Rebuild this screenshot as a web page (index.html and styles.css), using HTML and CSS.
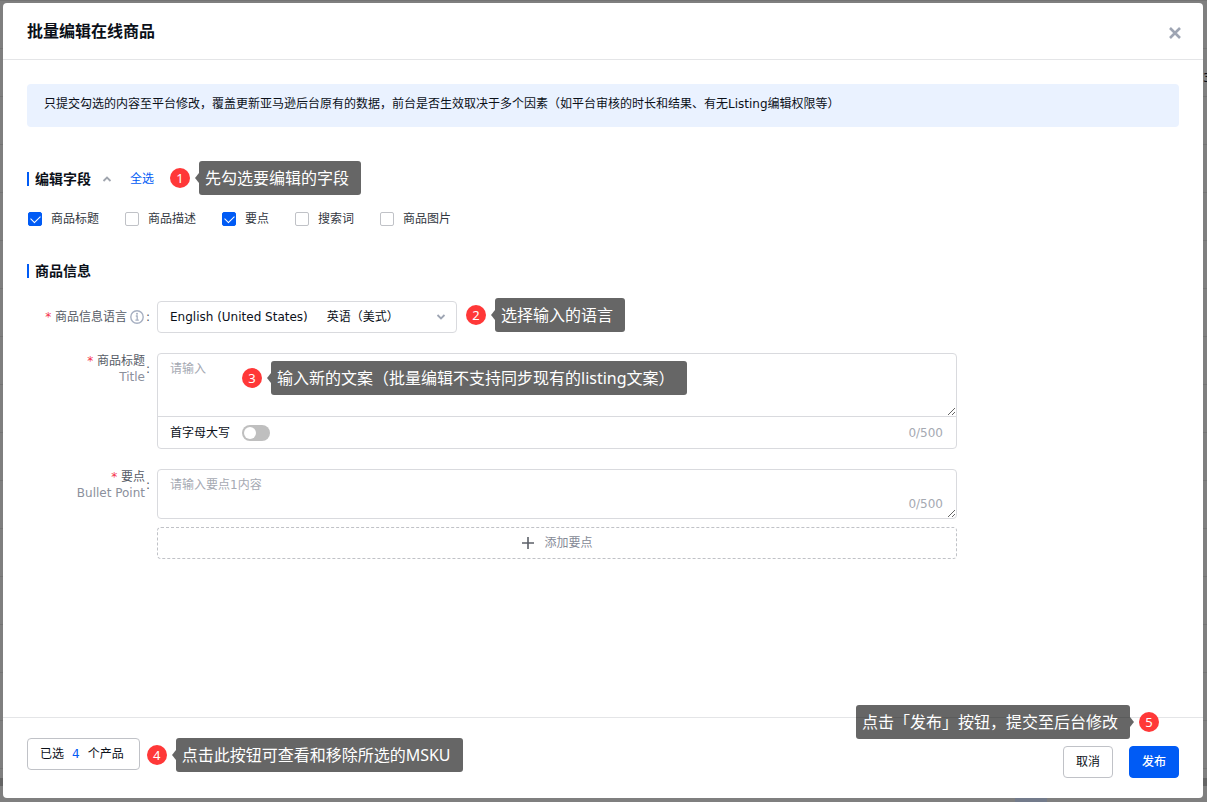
FILE: index.html
```html
<!DOCTYPE html>
<html lang="zh-CN">
<head>
<meta charset="utf-8">
<title>批量编辑在线商品</title>
<link rel="stylesheet" href="styles.css">
</head>
<body>
<div class="backdrop">
  <span class="behind-text" aria-hidden="true">3</span>
  <span class="behind-scroll" aria-hidden="true"></span>
  <span class="behind-chip" aria-hidden="true"></span>
  <main class="modal">
    <header class="modal-head">
      <h1>批量编辑在线商品</h1>
      <button class="close" type="button" aria-label="关闭">
        <svg width="12" height="12" viewBox="0 0 12 12"><path d="M1 1l10 10M11 1L1 11" fill="none" stroke="#9ea5b3" stroke-width="2.6"/></svg>
      </button>
    </header>

    <div class="modal-body">
      <p class="alert">只提交勾选的内容至平台修改，覆盖更新亚马逊后台原有的数据，前台是否生效取决于多个因素（如平台审核的时长和结果、有无Listing编辑权限等）</p>

      <section class="section">
        <div class="section-head">
          <h2>编辑字段</h2>
          <button class="fold" type="button" aria-label="收起">
            <svg width="10" height="6" viewBox="0 0 10 6"><path d="M1.5 5L5 1.5 8.5 5" fill="none" stroke="#a0a5ae" stroke-width="1.8"/></svg>
          </button>
          <a class="all" href="#">全选</a>
          <div class="callout callout-fields"><span class="num">1</span><span class="tip">先勾选要编辑的字段</span></div>
        </div>
        <div class="checks">
          <label><input type="checkbox" checked>商品标题</label>
          <label><input type="checkbox">商品描述</label>
          <label><input type="checkbox" checked>要点</label>
          <label><input type="checkbox">搜索词</label>
          <label><input type="checkbox">商品图片</label>
        </div>
      </section>

      <section class="section">
        <div class="section-head"><h2>商品信息</h2></div>
        <form class="form">
          <div class="row row-center">
            <label class="label" for="lang">
              <span><span class="req">*</span> 商品信息语言</span>
              <svg class="info" width="14" height="14" viewBox="0 0 14 14"><circle cx="7" cy="7" r="6.2" fill="none" stroke="#a7b0c2" stroke-width="1.4"/><path d="M5.800 6h1.400v4M5.400 10.200h3.400" fill="none" stroke="#a7b0c2" stroke-width="1.3"/><circle cx="7" cy="3.8" r="1" fill="#a7b0c2"/></svg>
              <span class="colon">:</span>
            </label>
            <div class="select-wrap">
              <select id="lang"><option>English (United States)&nbsp;&nbsp;&nbsp;&nbsp;&nbsp;英语（美式）</option></select>
              <svg class="arrow" width="10" height="6" viewBox="0 0 10 6"><path d="M1.5 1L5 4.5 8.5 1" fill="none" stroke="#9ea5b3" stroke-width="1.8"/></svg>
              <div class="callout callout-lang"><span class="num">2</span><span class="tip">选择输入的语言</span></div>
            </div>
          </div>

          <div class="row">
            <label class="label" for="title">
              <span><span class="req">*</span> 商品标题<br><span class="en">Title</span></span>
              <span class="colon">:</span>
            </label>
            <div class="field">
              <div class="box">
                <textarea id="title" class="title-input" placeholder="请输入"></textarea>
                <div class="box-foot">
                  <label class="caps">首字母大写<input class="switch" type="checkbox" role="switch"></label>
                  <span class="count">0/500</span>
                </div>
              </div>
              <div class="callout callout-title"><span class="num">3</span><span class="tip">输入新的文案（批量编辑不支持同步现有的listing文案）</span></div>
            </div>
          </div>

          <div class="row">
            <label class="label" for="bullet">
              <span><span class="req">*</span> 要点<br><span class="en">Bullet Point</span></span>
              <span class="colon">:</span>
            </label>
            <div class="field">
              <div class="box">
                <textarea id="bullet" class="bullet-input" placeholder="请输入要点1内容"></textarea>
                <span class="count count-over">0/500</span>
              </div>
              <button class="add" type="button">
                <svg width="14" height="14" viewBox="0 0 14 14"><path d="M7 1v12M1 7h12" fill="none" stroke="#5c6068" stroke-width="1.6"/></svg>
                添加要点
              </button>
            </div>
          </div>
        </form>
      </section>
    </div>

    <footer class="modal-foot">
      <div class="picked">
        <button class="btn" type="button">已选<b>4</b>个产品</button>
        <div class="callout callout-picked"><span class="num">4</span><span class="tip">点击此按钮可查看和移除所选的MSKU</span></div>
      </div>
      <div class="actions">
        <button class="btn" type="button">取消</button>
        <button class="btn btn-primary" type="button">发布</button>
        <div class="callout callout-publish"><span class="tip tip-right">点击「发布」按钮，提交至后台修改</span><span class="num">5</span></div>
      </div>
    </footer>
  </main>
</div>
</body>
</html>
```

FILE: styles.css
```css
* { box-sizing: border-box; }

body {
  margin: 0;
  color: #0b1019;
  font: 12px/18px "DejaVu Sans", "Noto Sans CJK SC", sans-serif;
}

button, select, textarea, input { font: inherit; color: inherit; margin: 0; }
button { cursor: pointer; }
h1, h2, p { margin: 0; }

/* Dimmed page behind the dialog */
.backdrop {
  position: relative;
  display: flex;
  min-height: 100vh;
  padding: 3px 4px 4px 3px;
  overflow: hidden;
  background: repeating-linear-gradient(#747474 0 1px, #7f7f7f 1px 48px);
}
.behind-text { position: absolute; top: 69px; left: calc(100% - 4px); }
.behind-scroll { position: absolute; left: 0; right: 0; bottom: 16px; height: 8px; background: #646464; }
.behind-chip { position: absolute; right: 160px; bottom: 0; width: 32px; height: 4px; background: #737b8b; }

.modal {
  position: relative;
  flex: 1;
  min-width: 0;
  display: flex;
  flex-direction: column;
  background: #fff;
  border-radius: 4px;
}
.modal-head {
  display: flex;
  justify-content: space-between;
  align-items: center;
  height: 57px;
  padding: 2px 20px 0 24px;
  border-bottom: 1px solid #e4e5e7;
}
h1 { font-size: 16px; line-height: 24px; font-weight: 600; }
.close { display: flex; padding: 4px 2px 2px; border: 0; background: none; }

.modal-body { flex: 1; padding: 24px; }
.alert {
  padding: 11px 17px 14px;
  border-radius: 4px;
  background: #eaf2ff;
}

.section { margin-top: 42px; }
.section + .section { margin-top: 33px; }
.section-head { position: relative; display: flex; align-items: center; height: 20px; }
h2 {
  display: flex;
  align-items: center;
  gap: 6px;
  font-size: 14px;
  line-height: 20px;
  font-weight: 600;
}
h2::before { content: ""; width: 2px; height: 14px; background: #005bf5; }
.fold { display: flex; margin: 0 18px 0 11px; padding: 0; border: 0; background: none; }
.all { color: #005bf5; text-decoration: none; }

.checks { display: flex; flex-wrap: wrap; gap: 26px; margin: 21px 0 0 1px; }
.checks label { display: flex; align-items: center; gap: 9px; color: #33373f; }
.checks input {
  appearance: none;
  width: 14px;
  height: 14px;
  border: 1px solid #c0c2c7;
  border-radius: 2px;
  background: #fff;
}
.checks input:checked {
  display: grid;
  place-items: center;
  border-color: #005bf5;
  background: #005bf5;
}
.checks input:checked::after {
  content: "";
  width: 8px;
  height: 5px;
  margin-bottom: 2px;
  border: solid #fff;
  border-width: 0 0 1px 1px;
  rotate: -45deg;
}

.form { display: grid; gap: 20px; margin-top: 20px; }
.row { display: flex; align-items: flex-start; }
.row-center { align-items: center; }
.label {
  display: flex;
  flex: 0 0 130px;
  align-items: center;
  justify-content: flex-end;
  padding-right: 7px;
  color: #565b66;
  line-height: 16px;
  text-align: right;
}
.req { color: #f5314b; }
.en { color: #8b909c; }
.info { margin: 0 1px 0 3px; }
.colon { width: 4px; margin-left: 1px; }

.select-wrap { position: relative; flex: 0 1 300px; }
select {
  display: block;
  appearance: none;
  width: 100%;
  height: 32px;
  padding: 0 32px 0 12px;
  border: 1px solid #d9dade;
  border-radius: 4px;
  background: #fff;
}
.arrow { position: absolute; top: 13px; right: 11px; pointer-events: none; }

.field { position: relative; flex: 0 1 800px; }
.box { position: relative; border: 1px solid #d9dade; border-radius: 4px; }
textarea {
  display: block;
  width: 100%;
  padding: 6px 12px;
  border: 0;
  border-radius: 4px;
  background: none;
  resize: vertical;
}
textarea::placeholder { color: #a5a9b2; }
.title-input { height: 62px; }
.bullet-input { height: 48px; }
.box-foot {
  display: flex;
  align-items: center;
  justify-content: space-between;
  height: 32px;
  padding: 0 13px 0 12px;
  border-top: 1px solid #d9dade;
}
.caps { display: flex; align-items: center; gap: 12px; }
.switch {
  appearance: none;
  width: 28px;
  height: 16px;
  padding: 2px;
  border-radius: 8px;
  background: #bfbfbf;
}
.switch::before { content: ""; display: block; width: 12px; height: 12px; border-radius: 50%; background: #fff; }
.switch:checked { background: #005bf5; }
.switch:checked::before { margin-left: auto; }
.count { color: #a5a9b2; }
.count-over { position: absolute; right: 13px; bottom: 5px; }
.add {
  display: flex;
  align-items: center;
  justify-content: center;
  gap: 9px;
  width: 100%;
  height: 32px;
  margin-top: 8px;
  border: 1px dashed #c0c2c7;
  border-radius: 4px;
  background: #fff;
  color: #858a96;
}

.modal-foot {
  display: flex;
  justify-content: space-between;
  align-items: flex-start;
  padding: 20px 24px;
  border-top: 1px solid #e4e5e7;
}
.picked, .actions { position: relative; }
.actions { display: flex; gap: 16px; padding-top: 8px; }
.btn {
  height: 32px;
  padding: 0 12px;
  border: 1px solid #c0c2c7;
  border-radius: 4px;
  background: #fff;
}
.picked .btn { padding-right: 15px; }
.btn b { margin: 0 8px; color: #005bf5; font-weight: 400; }
.btn-primary { border-color: #005bf5; background: #005bf5; color: #fff; font-weight: 500; }

/* Numbered walkthrough notes laid over the dialog */
.callout {
  position: absolute;
  z-index: 1;
  display: flex;
  align-items: center;
  gap: 9px;
  font-family: "Noto Sans", "Noto Sans CJK SC", sans-serif;
  color: #fff;
  white-space: nowrap;
}
.num {
  width: 20px;
  border-radius: 50%;
  background: #ff3838;
  font-size: 13px;
  line-height: 20px;
  text-align: center;
}
.tip {
  position: relative;
  padding: 5px 12px 5px 6px;
  border-radius: 3px;
  background: rgba(0, 0, 0, .6);
  font-size: 16px;
  line-height: 24px;
}
.tip::before {
  content: "";
  position: absolute;
  top: 12px;
  right: 100%;
  border: solid transparent;
  border-width: 5px 4px 5px 0;
  border-right-color: rgba(0, 0, 0, .6);
}
.tip-right::before {
  right: auto;
  left: 100%;
  border-width: 5px 0 5px 4px;
  border-left-color: rgba(0, 0, 0, .6);
}
.callout-fields { left: 143px; top: -8px; }
.callout-lang { left: calc(100% + 9px); top: -3px; }
.callout-title { left: 85px; top: 8px; }
.callout-picked { left: calc(100% + 7px); top: 0; }
.callout-publish { right: 20px; bottom: calc(100% - 1px); }
```
